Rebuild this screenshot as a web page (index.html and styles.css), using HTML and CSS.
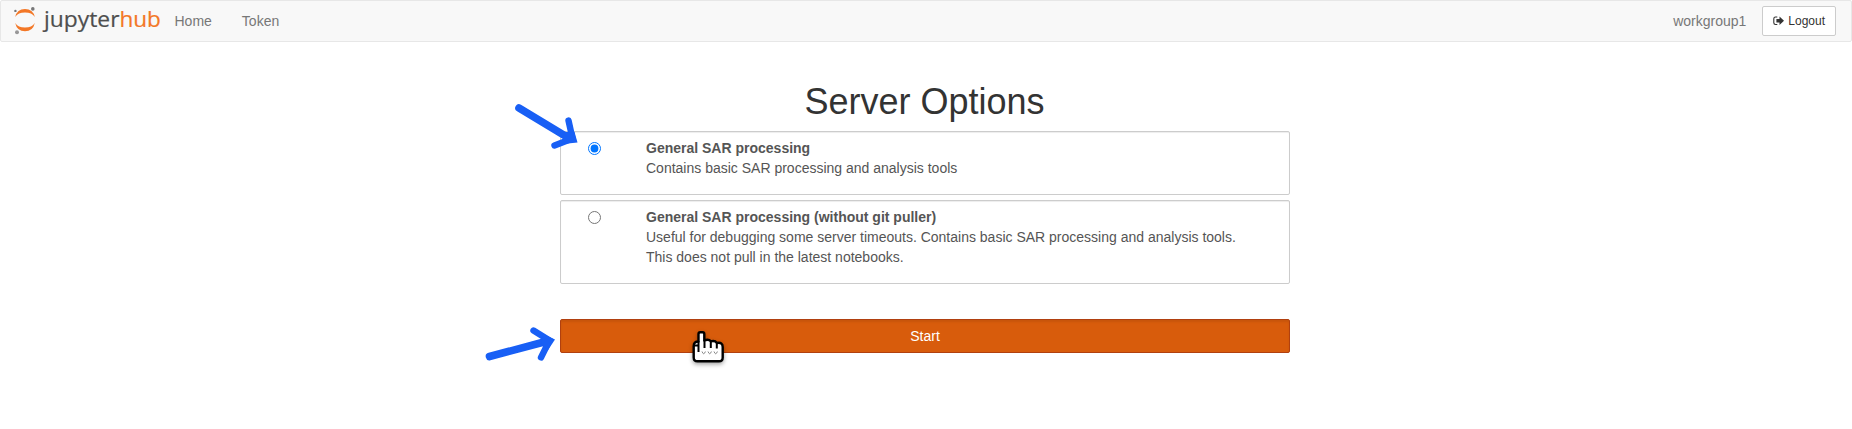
FILE: index.html
```html
<!DOCTYPE html>
<html lang="en">
<head>
<meta charset="utf-8">
<title>JupyterHub</title>
<link rel="stylesheet" href="styles.css">
</head>
<body>
<nav class="navbar">
  <a class="brand" aria-label="jupyterhub">
    <svg width="151" height="36" viewBox="0 0 151 36">
      <path d="M5.2 17Q7 9 15 9T24.8 17Q22 12.6 15 12.6T5.2 17Z" fill="#f37726"/>
      <path d="M5.2 23Q7 31.3 15 31.3T24.8 23Q22 27.5 15 27.5T5.2 23Z" fill="#f37726"/>
      <circle cx="22.8" cy="8.9" r="1.8" fill="#767677"/>
      <circle cx="5.4" cy="10.9" r="1.2" fill="#767677"/>
      <circle cx="7" cy="32.3" r="2" fill="#989798"/>
      <text class="logo-text" x="34" y="26.5" textLength="75.5" lengthAdjust="spacingAndGlyphs" fill="#4e4e4e" stroke="#4e4e4e">jupyter</text>
      <text class="logo-text" x="109.4" y="26.5" textLength="41.5" lengthAdjust="spacingAndGlyphs" fill="#f37726" stroke="#f37726">hub</text>
    </svg>
  </a>
  <a class="nav-link">Home</a>
  <a class="nav-link">Token</a>
  <span class="user">workgroup1</span>
  <a class="logout">
    <svg width="11" height="12" viewBox="0 0 11 12">
      <path d="M4.3 2H2.5Q.8 2 .8 3.7V7.8Q.8 9.5 2.5 9.5H4.3" fill="none" stroke="#333" stroke-width="1.1"/>
      <path d="M3.4 4H6.5V1.6L11 5.8L6.5 10V7.6H3.4Z" fill="#333"/>
    </svg>
    <span>Logout</span>
  </a>
</nav>
<main class="container">
  <h1>Server Options</h1>
  <form>
    <label class="option">
      <input type="radio" name="profile" checked>
      <span class="details"><strong>General SAR processing</strong><span>Contains basic SAR processing and analysis tools</span></span>
    </label>
    <label class="option">
      <input type="radio" name="profile">
      <span class="details"><strong>General SAR processing (without git puller)</strong><span>Useful for debugging some server timeouts. Contains basic SAR processing and analysis tools.<br>This does not pull in the latest notebooks.</span></span>
    </label>
    <button class="start" type="button">Start</button>
  </form>
</main>
<svg class="annotations" width="1852" height="429" viewBox="0 0 1852 429">
  <g fill="none" stroke="#185ff5" stroke-linecap="round">
    <path d="M519 108L567 137" stroke-width="7.6"/>
    <path d="M568.5 120.5L572.5 138.5L554.5 145.5" stroke-width="6.4"/>
    <path d="M489.5 356.5L544 342" stroke-width="7.6"/>
    <path d="M533.5 330.5L549.5 340.5L541 357.5" stroke-width="6.4"/>
  </g>
  <path d="M563 132L574.5 132L577.5 142.5L563 144Z" fill="#185ff5"/>
  <path d="M543 334L555 339.5L548 350L541 345Z" fill="#185ff5"/>
  <g class="pointer">
    <path d="M698.5 334Q698.5 332.3 700.2 332.3H702.6Q704.3 332.3 704.3 334V340.5Q708.5 338.8 711 341.3Q715 340.3 717 343Q722.7 341.8 722.7 347V357.5Q722.7 361.3 719 361.3H697.5Q693.7 361.3 693.7 357.5V346Q693.7 341.5 698.5 341.5Z" fill="#fff" stroke="#000" stroke-width="2.4" stroke-linejoin="round"/>
    <path d="M698.5 341V352M704.5 340V348M710.8 341V348M716.8 343V348.5M694 345.5H698" fill="none" stroke="#000" stroke-width="2"/>
    <path d="M702 351.5q1.7 4.5 3.4 0M708 351.5q1.7 4.5 3.4 0M714 351.5q1.7 4.5 3.4 0" fill="none" stroke="#888" stroke-width="1"/>
  </g>
</svg>
</body>
</html>
```
FILE: styles.css
```css
* { box-sizing: border-box; }
body {
  margin: 0;
  background: #fff;
  color: #333;
  font: 14px/20px "Liberation Sans", Arial, sans-serif;
}
.navbar {
  display: flex;
  align-items: center;
  height: 42px;
  padding: 0 15px 0 9px;
  background: #f8f8f8;
  border: 1px solid #e7e7e7;
  border-radius: 2px;
  color: #777;
}
.brand { display: flex; height: 42px; margin-right: 13.5px; }
.logo-text { font-family: "Open Sans", "Noto Sans", sans-serif; font-size: 22px; stroke-width: .2px; }
.nav-link { margin-right: 30px; }
.user { margin-left: auto; margin-right: 16px; }
.logout {
  display: flex;
  align-items: center;
  gap: 4px;
  height: 30px;
  padding: 0 10px;
  background: #fff;
  border: 1px solid #ccc;
  border-radius: 2px;
  color: #333;
  font-size: 12px;
  line-height: 18px;
}
.container { width: 730px; margin: 40px auto 0 560px; }
h1 {
  margin: 0 0 9px;
  padding-right: 1px;
  font-size: 36px;
  font-weight: 400;
  line-height: 40px;
  text-align: center;
}
.option {
  display: flex;
  align-items: flex-start;
  margin-bottom: 5px;
  padding: 6px 27px 16px;
  border: 1px solid #ccc;
  border-radius: 2px;
  box-shadow: inset 0 1px 1px rgba(0, 0, 0, .075);
  color: #555;
}
.option input { width: 13px; height: 13px; margin: 4px 45px 0 0; }
.details { display: flex; flex-direction: column; }
.start {
  display: block;
  width: 100%;
  height: 34px;
  margin-top: 35px;
  padding: 0;
  background: #d85c0c;
  border: 1px solid #b1400f;
  border-radius: 2px;
  box-shadow: inset 0 2px 2px rgba(0, 0, 0, .08);
  color: #fff;
  font: 14px/20px "Liberation Sans", Arial, sans-serif;
}
.annotations { position: absolute; top: 0; left: 0; pointer-events: none; }
.pointer { filter: drop-shadow(0 2px 2px rgba(0, 0, 0, .35)); }
```
